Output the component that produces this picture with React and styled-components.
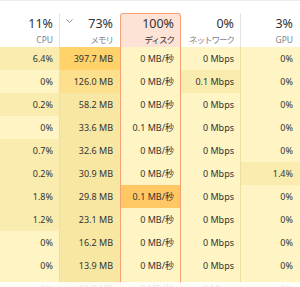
import React from "react";
import styled, { createGlobalStyle } from "styled-components";

const GlobalStyle = createGlobalStyle`
  html, body { margin: 0; padding: 0; background: #ffffff; }
  body { font-family: "Noto Sans", "Noto Sans CJK JP", sans-serif; color: #333; }
`;

const HEAT = {
  0: "#fff4c4",
  1: "#f9ecae",
  2: "#f8e7a2",
  3: "#fce08e",
  4: "#ffd26a",
  5: "#ffc865",
};

const COLS = "60px 60px 61px 60px 59px";

const Frame = styled.div`
  position: relative;
  width: 300px;
  height: 287px;
  overflow: hidden;
  background: #fff;
`;

const Header = styled.div`
  display: grid;
  grid-template-columns: ${COLS};
  padding-top: 12px;
  border-top: 1px solid #ececec;
  height: 34px;
`;

const HeadCell = styled.div`
  position: relative;
  display: flex;
  flex-direction: column;
  align-items: flex-end;
  padding: 3px 6px 0 0;
  box-sizing: border-box;
  border-right: 1px solid ${(p) => (p.$divider ? "#e3e3e3" : "transparent")};
  ${(p) =>
    p.$active &&
    `
    background: #fde3d6;
    border: 1px solid #f3a27c;
    border-bottom: none;
    border-radius: 3px 3px 0 0;
    padding-top: 2px;
  `}
`;

const Percent = styled.span`
  font-size: 12.5px;
  line-height: 16px;
  color: #333;
`;

const Label = styled.span`
  font-size: 8.5px;
  line-height: 12px;
  margin-top: 2px;
  white-space: nowrap;
  letter-spacing: ${(p) => (p.$cjk ? "-1px" : "0")};
  color: ${(p) => (p.$active ? "#333" : "#7d8590")};
`;

const Chevron = styled.svg`
  position: absolute;
  left: 6px;
  top: 6px;
`;

const Row = styled.div`
  display: grid;
  grid-template-columns: ${COLS};
  height: 23px;
`;

const Cell = styled.div`
  display: flex;
  align-items: center;
  justify-content: flex-end;
  padding-right: 6px;
  box-sizing: border-box;
  font-size: 9px;
  color: #333;
  white-space: nowrap;
  background: ${(p) => HEAT[p.$heat || 0]};
  border-right: 1px solid ${(p) => (p.$divider ? "#efdf9f" : "transparent")};
  ${(p) =>
    p.$disk &&
    `
    border-left: 1px solid #f4a176;
    border-right: 1px solid #f4a176;
  `}
`;

const Fade = styled.div`
  position: absolute;
  left: 0;
  right: 0;
  bottom: 0;
  height: 5px;
  background: rgba(255, 255, 255, 0.88);
`;

const headers = [
  { pct: "11%", label: "CPU", divider: true },
  { pct: "73%", label: "メモリ", chevron: true, cjk: true },
  { pct: "100%", label: "ディスク", active: true, cjk: true },
  { pct: "0%", label: "ネットワーク", divider: true, cjk: true },
  { pct: "3%", label: "GPU" },
];

const rows = [
  [["6.4%", 1], ["397.7 MB", 4], ["0 MB/秒", 0], ["0 Mbps", 0], ["0%", 0]],
  [["0%", 0], ["126.0 MB", 3], ["0 MB/秒", 0], ["0.1 Mbps", 1], ["0%", 0]],
  [["0.2%", 1], ["58.2 MB", 2], ["0 MB/秒", 0], ["0 Mbps", 0], ["0%", 0]],
  [["0%", 0], ["33.6 MB", 2], ["0.1 MB/秒", 0], ["0 Mbps", 0], ["0%", 0]],
  [["0.7%", 1], ["32.6 MB", 2], ["0 MB/秒", 0], ["0 Mbps", 0], ["0%", 0]],
  [["0.2%", 1], ["30.9 MB", 2], ["0 MB/秒", 0], ["0 Mbps", 0], ["1.4%", 1]],
  [["1.8%", 1], ["29.8 MB", 2], ["0.1 MB/秒", 5], ["0 Mbps", 0], ["0%", 0]],
  [["1.2%", 1], ["23.1 MB", 2], ["0 MB/秒", 0], ["0 Mbps", 0], ["0%", 0]],
  [["0%", 0], ["16.2 MB", 2], ["0 MB/秒", 0], ["0 Mbps", 0], ["0%", 0]],
  [["0%", 0], ["13.9 MB", 2], ["0 MB/秒", 0], ["0 Mbps", 0], ["0%", 0]],
  [["0%", 0], ["11.8 MB", 2], ["0 MB/秒", 0], ["0 Mbps", 0], ["0%", 0]],
];

export default function App() {
  return (
    <>
      <GlobalStyle />
      <Frame>
        <Header>
          {headers.map((h) => (
            <HeadCell key={h.label} $divider={h.divider} $active={h.active}>
              {h.chevron && (
                <Chevron width="7" height="4" viewBox="0 0 7 4">
                  <path d="M0.5 0.5 L3.5 3.3 L6.5 0.5" fill="none" stroke="#8a8a8a" strokeWidth="1" />
                </Chevron>
              )}
              <Percent>{h.pct}</Percent>
              <Label $active={h.active} $cjk={h.cjk}>{h.label}</Label>
            </HeadCell>
          ))}
        </Header>
        {rows.map((r, i) => (
          <Row key={i}>
            {r.map(([v, heat], j) => (
              <Cell key={j} $heat={heat} $divider={j === 0 || j === 3} $disk={j === 2}>
                {v}
              </Cell>
            ))}
          </Row>
        ))}
        <Fade />
      </Frame>
    </>
  );
}
